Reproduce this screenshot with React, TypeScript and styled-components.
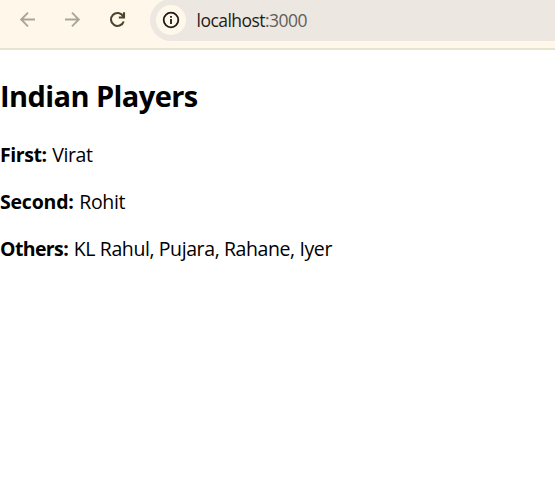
import React from "react";
import styled, { createGlobalStyle } from "styled-components";

const GlobalStyle = createGlobalStyle`
  * { box-sizing: border-box; }
  body {
    margin: 0;
    background: #fff;
    color: #000;
    font-family: "Open Sans", "Noto Sans", sans-serif;
    overflow: hidden;
  }
`;

const Toolbar = styled.header`
  display: flex;
  height: 50px;
  background: #fff8ea;
  border-bottom: 2px solid #e6e3d0;
`;

const NavButtons = styled.nav`
  display: flex;
  width: 150px;
  height: 40px;
  flex: none;
  align-items: center;
  padding-left: 16px;
  gap: 21px;
`;

const NavIcon = styled.svg<{ $active?: boolean }>`
  display: block;
  flex: none;
  width: 24px;
  height: 24px;
  fill: none;
  stroke: ${(p) => (p.$active ? "#4b452d" : "#aaa598")};
  stroke-width: ${(p) => (p.$active ? 2.1 : 1.9)};
`;

const AddressBar = styled.div`
  display: flex;
  flex: 1;
  height: 42px;
  margin-top: -1px;
  align-items: center;
  padding-left: 6px;
  background: #ece7e0;
  border-radius: 21px 0 0 21px;
`;

const SiteInfo = styled.div`
  display: flex;
  width: 30px;
  height: 30px;
  align-items: center;
  justify-content: center;
  border-radius: 50%;
  background: #fff8ea;
`;

const InfoIcon = styled.svg`
  width: 18px;
  height: 18px;
  display: block;
`;

const Url = styled.span`
  margin-left: 10.5px;
  font-size: 17.5px;
  line-height: 24px;
  letter-spacing: -0.53px;
  color: #1f1c17;
`;

const Port = styled.span`
  color: #625e59;
`;

const Page = styled.main`
  padding-top: 26px;
`;

const Title = styled.h2`
  margin: 0 0 25px;
  font-size: 29px;
  line-height: 40px;
  font-weight: 700;
  letter-spacing: -0.58px;
`;

const Player = styled.p`
  margin: 0 0 20px;
  font-size: 19.5px;
  line-height: 27px;
  letter-spacing: -0.4px;
  white-space: nowrap;
`;

const Label = styled.b<{ $tracking: number }>`
  margin-right: 1px;
  font-weight: 700;
  letter-spacing: ${(p) => p.$tracking}px;
`;

const players = [
  { label: "First:", names: "Virat", tracking: -0.45 },
  { label: "Second:", names: "Rohit", tracking: -0.2 },
  { label: "Others:", names: "KL Rahul, Pujara, Rahane, Iyer", tracking: -0.62 },
];

export default function App() {
  return (
    <>
      <GlobalStyle />
      <Toolbar>
        <NavButtons>
          <NavIcon viewBox="0 0 24 24">
            <path d="M19 11.5H5.5M12 4.7L5.2 11.5L12 18.3" />
          </NavIcon>
          <NavIcon viewBox="0 0 24 24">
            <path d="M4 11.5H17.5M11 4.7L17.8 11.5L11 18.3" />
          </NavIcon>
          <NavIcon viewBox="0 0 24 24" $active>
            <path d="M17.2 8.3A6.5 6.5 0 1 0 17.7 13.5M18 4.3V9.5H12.8" />
          </NavIcon>
        </NavButtons>
        <AddressBar>
          <SiteInfo>
            <InfoIcon viewBox="0 0 18 18">
              <circle cx="9" cy="9" r="7.3" fill="none" stroke="#1f1c17" strokeWidth="1.8" />
              <path d="M9 8V13M9 5V6.8" stroke="#1f1c17" strokeWidth="1.8" />
            </InfoIcon>
          </SiteInfo>
          <Url>
            localhost<Port>:3000</Port>
          </Url>
        </AddressBar>
      </Toolbar>
      <Page>
        <Title>Indian Players</Title>
        {players.map((p) => (
          <Player key={p.label}>
            <Label $tracking={p.tracking}>{p.label}</Label> {p.names}
          </Player>
        ))}
      </Page>
    </>
  );
}
